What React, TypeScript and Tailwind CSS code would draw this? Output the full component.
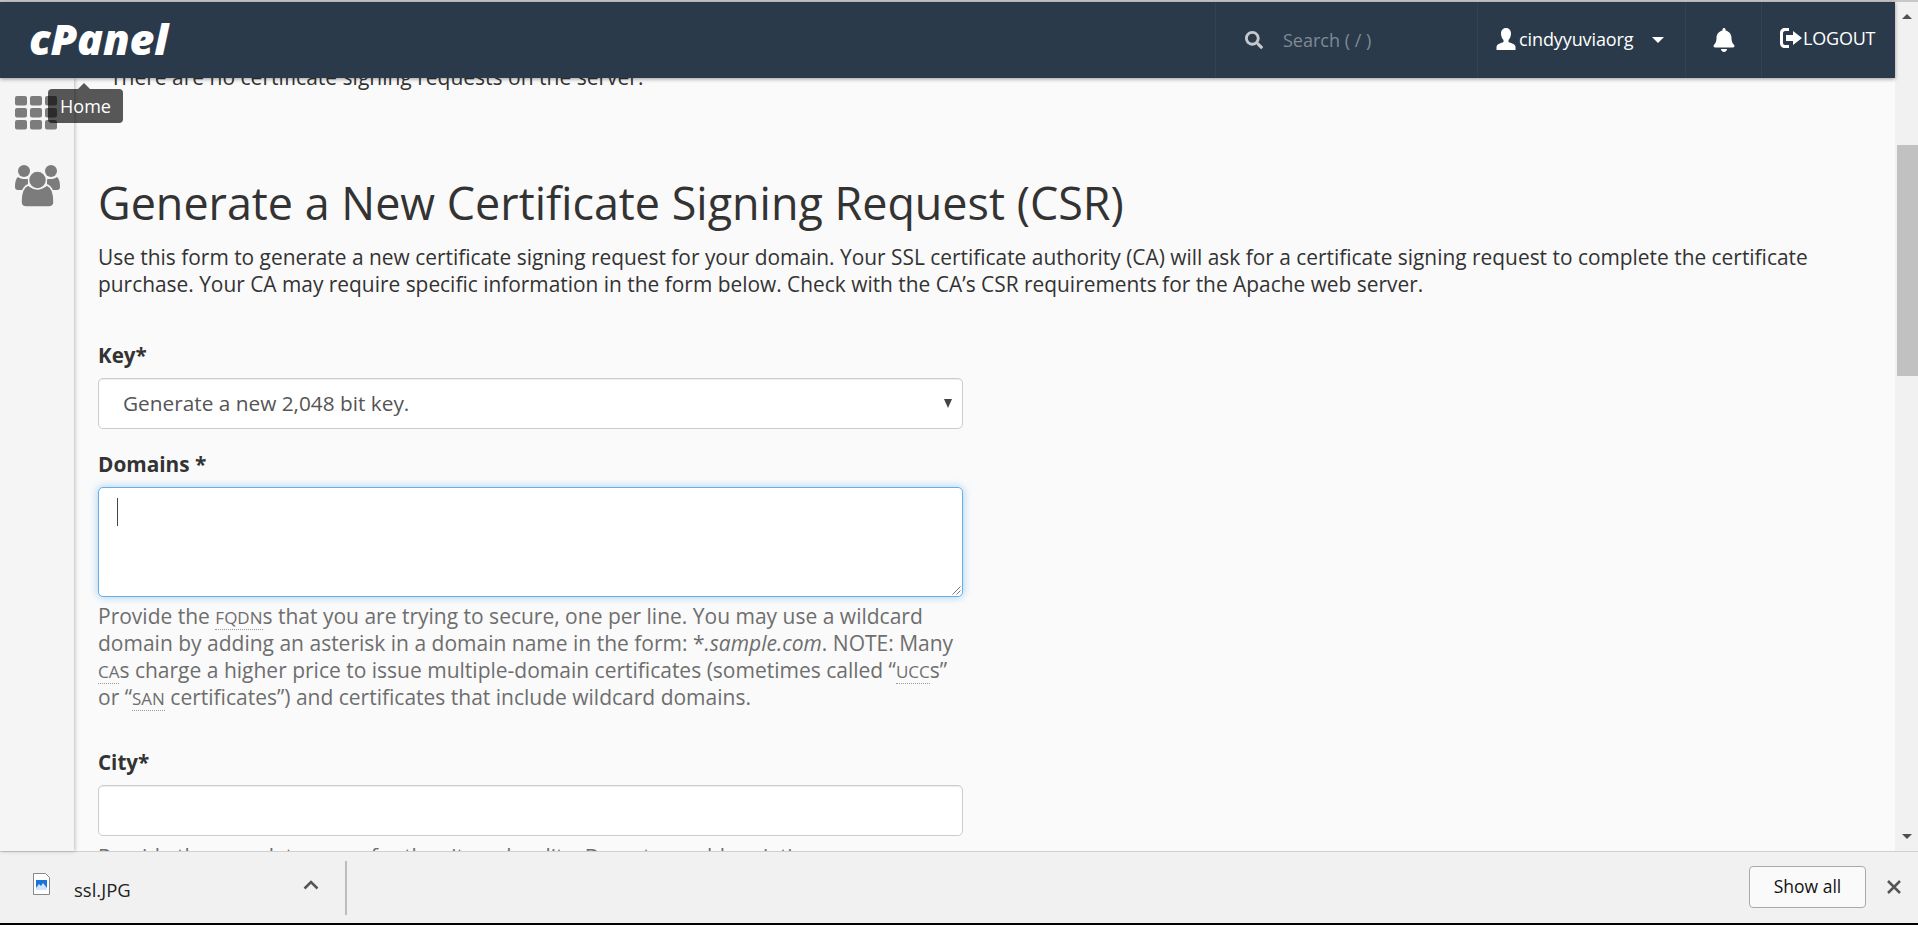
import React from "react";
import { FaBell, FaSearch } from "react-icons/fa";

const sans = "font-['Open_Sans','Liberation_Sans',sans-serif]";

function Abbr({ children }: { children: React.ReactNode }) {
  return <span className="text-[17px] leading-none border-b border-dotted border-[#999]">{children}</span>;
}

function HomeIcon() {
  const cols = [0, 15, 30];
  const rows = [0, 12, 24];
  return (
    <svg width="42" height="34" viewBox="0 0 42 34" fill="#7c7c7c">
      {rows.map((y) =>
        cols.map((x) => <rect key={`${x}-${y}`} x={x} y={y} width="12" height="9.500" rx="2" />)
      )}
    </svg>
  );
}

function UsersIcon() {
  return (
    <svg width="45" height="42" viewBox="0 0 45 42" fill="#7c7c7c">
      <circle cx="9" cy="6" r="6" />
      <circle cx="36" cy="6" r="6" />
      <path d="M0 22c0-4 .5-8 3-10 2 1.500 4 2 6 2h4v11H3c-2 0-3-1-3-3zM45 22c0-4-.5-8-3-10-2 1.500-4 2-6 2h-4v11h10c2 0 3-1 3-3z" />
      <path d="M6 37c0-8 1.500-15 7-17 3 2.500 6 3.500 9.500 3.500S29 22.500 32 20c5.500 2 7 9 7 17 0 3.500-2 5-5.500 5h-22C8 42 6 40.500 6 37z" stroke="#f5f5f5" strokeWidth="1.500" />
      <circle cx="22.500" cy="15" r="9" stroke="#f5f5f5" strokeWidth="1.500" />
    </svg>
  );
}

function UserIcon() {
  return (
    <svg width="20" height="22" viewBox="0 0 20 22" fill="#fff">
      <path d="M10 0c3.300 0 5 2.500 5 5.500 0 2.500-1 5-2.500 6.500v2c2 1 7 2 7 5v3H.5v-3c0-3 5-4 7-5v-2C6 10.500 5 8 5 5.500 5 2.500 6.700 0 10 0z" />
    </svg>
  );
}

function LogoutIcon() {
  return (
    <svg width="23" height="20" viewBox="0 0 23 20" fill="#fff">
      <path d="M9 0H5C2 0 0 2 0 5v10c0 3 2 5 5 5h4v-3H5c-1 0-2-1-2-2V5c0-1 1-2 2-2h4V0z" />
      <path d="M13 3l9 7-9 7v-4H6V7h7V3z" />
    </svg>
  );
}

export default function App() {
  return (
    <div className={`h-[925px] w-[1918px] overflow-hidden flex flex-col bg-[#fafafa] ${sans}`}>
      <div className="h-[2px] bg-[#c8c8c8] shrink-0" />

      <div className="flex-1 min-h-0 flex">
        <div className="flex-1 min-w-0 flex flex-col relative">
          {/* top bar */}
          <header className="relative z-10 h-[76px] shrink-0 bg-[#2b3a4a] shadow-[0_1px_4px_rgba(0,0,0,0.4)] flex items-stretch text-white">
            <div className="flex-1 pl-[29px] pb-[4px] flex items-center">
              <span className="text-[43px] leading-none font-extrabold italic tracking-[-0.2px]">cPanel</span>
            </div>
            <div className="w-[262px] border-l border-[#33424f] flex items-center pl-[29px] gap-[20px]">
              <FaSearch size={18} className="text-[#c4c8cc]" />
              <span className="text-[18px] text-[#7f8a94]">Search ( / )</span>
            </div>
            <div className="w-[208px] border-l border-[#33424f] flex items-center pl-[18px] pb-[2px]">
              <UserIcon />
              <span className="ml-[3px] text-[18px] font-medium tracking-[-0.1px]">cindyyuviaorg</span>
              <span className="ml-[18px] mt-[2px] w-0 h-0 border-x-[6px] border-x-transparent border-t-[6px] border-t-white" />
            </div>
            <div className="w-[76px] border-l border-[#33424f] flex items-center justify-center">
              <FaBell size={24} />
            </div>
            <div className="flex-1 max-w-[134px] border-l border-[#33424f] flex items-center pl-[18px] pb-[4px]">
              <LogoutIcon />
              <span className="text-[18px] font-medium tracking-[-0.2px]">LOGOUT</span>
            </div>
          </header>

          <div className="flex-1 min-h-0 flex">
            {/* sidebar */}
            <aside className="relative w-[74px] shrink-0 bg-[#f5f5f5] shadow-[1px_0_4px_rgba(0,0,0,0.25)] flex flex-col pl-[15px] pt-[18px] gap-[35px]">
              <HomeIcon />
              <UsersIcon />
            </aside>

            {/* form */}
            <main className="flex-1 min-w-0 overflow-hidden pl-[24px] pr-[60px] text-[20.800px] leading-[27px] text-[#333]">
              <p className="-mt-[14px] ml-[12px] text-[21px]">There are no certificate signing requests on the server.</p>
              <h1 className="mt-[84px] text-[44.900px] leading-[56px] font-normal">Generate a New Certificate Signing Request (CSR)</h1>
              <p className="mt-[13px] text-[20.900px]">
                Use this form to generate a new certificate signing request for your domain. Your SSL certificate authority (CA) will ask for a certificate signing request to complete the certificate purchase. Your CA may require specific information in the form below. Check with the CA’s CSR requirements for the Apache web server.
              </p>

              <div className="w-[865px]">
                <label className="block mt-[44px] font-bold text-[20.600px]">Key*</label>
                <div className="mt-[9px] h-[51px] bg-white border border-[#ccc] rounded-[5px] shadow-[inset_0_1px_1px_rgba(0,0,0,0.075)] flex items-center justify-between pl-[24px] pr-[10px] text-[#555]">
                  <span>Generate a new 2,048 bit key.</span>
                  <span className="w-0 h-0 border-x-[4px] border-x-transparent border-t-[9px] border-t-[#444]" />
                </div>

                <label className="block mt-[22px] font-bold">Domains *</label>
                <div className="mt-[9px] relative h-[110px] bg-white border border-[#66afe9] rounded-[5px] shadow-[0_0_8px_rgba(102,175,233,0.6)]">
                  <div className="ml-[18px] mt-[10px] w-px h-[28px] bg-[#444]" />
                  <svg className="absolute right-[1px] bottom-[1px]" width="10" height="10" viewBox="0 0 10 10" stroke="#777" fill="none">
                    <path d="M9.500 1.500L1.500 9.500M9.500 5.500L5.500 9.500" />
                  </svg>
                </div>

                <p className="mt-[6px] text-[21px] text-[#6e6e6e]">
                  Provide the <Abbr>FQDN</Abbr>s that you are trying to secure, one per line. You may use a wildcard domain by adding an asterisk in a domain name in the form: *<em>.sample.com</em>. NOTE: Many <Abbr>CA</Abbr>s charge a higher price to issue multiple-domain certificates (sometimes called “<Abbr>UCC</Abbr>s” or “<Abbr>SAN</Abbr> certificates”) and certificates that include wildcard domains.
                </p>

                <label className="block mt-[38px] font-bold text-[20.600px]">City*</label>
                <div className="mt-[9px] h-[51px] bg-white border border-[#ccc] rounded-[5px] shadow-[inset_0_1px_1px_rgba(0,0,0,0.075)]" />
                <p className="mt-[6px] text-[#6e6e6e] whitespace-nowrap">Provide the complete name for the city or locality. Do not use abbreviations.</p>
              </div>
            </main>
          </div>

          {/* hover tooltip for the home icon */}
          <div className="absolute z-20 left-[48px] top-[87px] h-[34px] w-[75px] rounded-[4px] bg-[rgba(0,0,0,0.65)] text-white text-[18px] flex items-center justify-center">
            Home
            <span className="absolute -top-[6px] left-[30px] w-0 h-0 border-x-[6px] border-x-transparent border-b-[6px] border-b-[rgba(0,0,0,0.65)]" />
          </div>
        </div>

        {/* scrollbar */}
        <div className="w-[23px] shrink-0 bg-[#f1f1f1] flex flex-col items-center justify-between py-[12px] relative">
          <span className="w-0 h-0 border-x-[5px] border-x-transparent border-b-[5px] border-b-[#505050]" />
          <div className="absolute left-[2px] right-0 top-[143px] h-[231px] bg-[#c1c1c1]" />
          <span className="w-0 h-0 border-x-[5px] border-x-transparent border-t-[5px] border-t-[#505050]" />
        </div>
      </div>

      {/* chrome download shelf */}
      <footer className="h-[72px] shrink-0 bg-[#f1f1f1] border-t border-[#d0d0d0] flex items-center font-['Liberation_Sans',sans-serif]">
        <svg className="ml-[33px] mb-[7px]" width="17" height="22" viewBox="0 0 17 22">
          <path d="M.5.500h12l4 4v17H.5z" fill="#fff" stroke="#888" />
          <rect x="3" y="7" width="11" height="10" fill="#1a73d9" />
          <path d="M3 15l3-4 2 2 2-3 4 5v2H3z" fill="#cfe4fb" />
        </svg>
        <span className={`ml-[24px] mt-[5px] text-[18.500px] text-[#222] ${sans}`}>ssl.JPG</span>
        <svg className="ml-[172px] mb-[6px]" width="16" height="10" viewBox="0 0 16 10" fill="none" stroke="#555" strokeWidth="2.500">
          <path d="M1.500 8.500L8 2l6.500 6.500" />
        </svg>
        <div className="ml-[26px] w-[2px] h-[54px] bg-[#bdbdbd]" />
        <div className="flex-1" />
        <button className={`w-[117px] h-[42px] mb-[2px] bg-[#fafafa] border border-[#aaa] rounded-[4px] text-[17.500px] font-medium text-[#111] ${sans}`}>
          Show all
        </button>
        <svg className="ml-[21px] mr-[17px] mb-[2px]" width="14" height="14" viewBox="0 0 14 14" stroke="#555" strokeWidth="2.500">
          <path d="M1 1l12 12M13 1L1 13" />
        </svg>
      </footer>

      <div className="h-[2px] bg-black shrink-0" />
    </div>
  );
}
